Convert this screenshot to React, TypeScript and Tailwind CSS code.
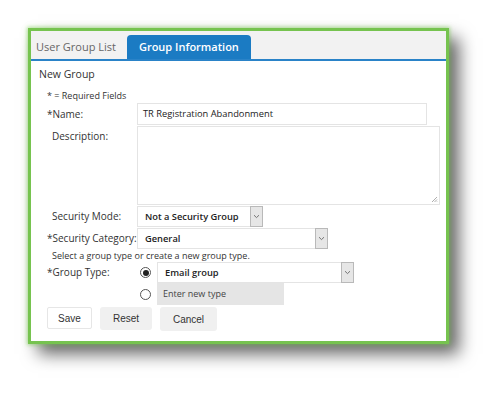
import { useState } from "react";

const sans = "font-['Open_Sans',sans-serif]";

function Chevron() {
  return (
    <svg width="7" height="5" viewBox="0 0 7 5" fill="none">
      <path d="M1 1.2 L3.5 3.6 L6 1.2" stroke="#666" strokeWidth="0.9" />
    </svg>
  );
}

function SelectBox({ value, width }: { value: string; width: string }) {
  return (
    <div className={`flex h-full items-stretch border border-[#e4e4e4] bg-white ${width}`}>
      <div className="flex flex-1 items-center pl-[7px] text-[9.3px] font-semibold text-[#222]">{value}</div>
      <div className="flex w-[13px] items-center justify-center border border-[#b9b9b9] bg-[#e6e6e6] -my-px -mr-px">
        <Chevron />
      </div>
    </div>
  );
}

function Radio({ checked }: { checked?: boolean }) {
  return (
    <div className="flex h-[11px] w-[11px] items-center justify-center rounded-full border border-[#555] bg-white">
      {checked && <div className="h-[6px] w-[6px] rounded-full bg-[#222]" />}
    </div>
  );
}

export default function App() {
  const [name] = useState("TR Registration Abandonment");

  return (
    <div className={`h-[395px] w-[500px] bg-white ${sans}`}>
      <div className="pl-[28px] pt-[28px]">
        <div className="h-[316px] w-[421px] border-[3px] border-[#76c34f] bg-white shadow-[0_0_4px_1px_rgba(120,200,80,0.6),10px_10px_16px_rgba(0,0,0,0.6)]">
          {/* tabs */}
          <div className="flex h-[30px] items-end border-b-2 border-[#2a83c8] bg-[#f2f2f2] pl-[5px]">
            <div className="flex h-[24px] items-center pr-[11px] text-[11px] text-[#666]">User Group List</div>
            <div className="flex h-[24px] items-center rounded-t-[4px] bg-[#1b7bc3] px-[12px] text-[11px] font-semibold text-white">
              Group Information
            </div>
          </div>

          <div className="pl-[8px] pt-[4px] text-[10px] text-[#333]">
            <div className="h-[18px] leading-[18px] text-[10.5px]">New Group</div>
            <div className="ml-[8px] mt-[6px] h-[14px] leading-[14px] text-[9px]">* = Required Fields</div>

            <div className="flex h-[22px] items-center">
              <div className="w-[98px] pl-[8px]">*Name:</div>
              <div className="flex h-full w-[290px] items-center border border-[#e4e4e4] pl-[5px] text-[9.3px] text-[#222]">
                {name}
              </div>
            </div>

            <div className="mt-px flex h-[79px]">
              <div className="w-[98px] pl-[13px] pt-[3px]">Description:</div>
              <div className="relative h-full w-[303px] border border-[#e4e4e4]">
                <svg className="absolute bottom-[1px] right-[1px]" width="7" height="7" viewBox="0 0 7 7">
                  <path d="M6 1 L1 6 M6 3.5 L3.5 6 M6 5.5 L5.5 6" stroke="#999" strokeWidth="0.8" />
                </svg>
              </div>
            </div>

            <div className="mt-px flex h-[21px] items-center">
              <div className="w-[98px] pl-[13px]">Security Mode:</div>
              <SelectBox value="Not a Security Group" width="w-[126px]" />
            </div>

            <div className="mt-px flex h-[21px] items-center">
              <div className="w-[98px] pl-[8px]">*Security Category:</div>
              <SelectBox value="General" width="w-[191px]" />
            </div>

            <div className="h-[13px] pl-[13px] text-[9px] leading-[13px]">Select a group type or create a new group type.</div>

            <div className="flex h-[21px] items-center">
              <div className="w-[101px] pl-[8px]">*Group Type:</div>
              <Radio checked />
              <div className="ml-[6px] h-full">
                <SelectBox value="Email group" width="w-[197px]" />
              </div>
            </div>

            <div className="flex h-[22px] items-center">
              <div className="w-[101px]" />
              <Radio />
              <div className="ml-[6px] flex h-full w-[127px] items-center bg-[#e5e5e5] pl-[6px] text-[9px] text-[#444]">
                Enter new type
              </div>
            </div>

            <div className="ml-[8px] mt-[2px] flex gap-[8px] font-['Liberation_Sans',Arial,sans-serif] text-[10px] text-[#333]">
              <button className="h-[22px] w-[45px] rounded-[2px] border border-[#e6e6e6] bg-white">Save</button>
              <button className="h-[23px] w-[52px] rounded-[3px] bg-[#f0f0f0]">Reset</button>
              <button className="h-[24px] w-[57px] rounded-[3px] bg-[#f0f0f0]">Cancel</button>
            </div>
          </div>
        </div>
      </div>
    </div>
  );
}
